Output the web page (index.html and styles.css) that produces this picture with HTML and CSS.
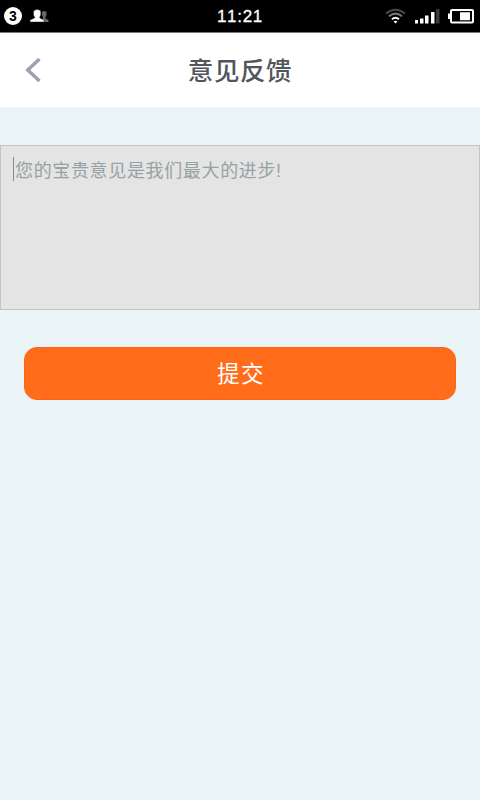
FILE: index.html
```html
<!DOCTYPE html>
<html lang="zh-CN">
<head>
<meta charset="utf-8">
<title>意见反馈</title>
<link rel="stylesheet" href="styles.css">
</head>
<body>
<div class="status">
  <div class="status-left">
    <span class="count">3</span>
    <svg class="people" width="20" height="14" viewBox="0 0 20 14"><path fill="#686868" d="M10.500 13v-2l2.500-1.500V8l-1-2V3.500Q12 2 14.200 2T16.500 3.500V6l-1 2v1.500l3 1.500v2z"/><path fill="#fff" stroke="#000" stroke-width=".4" d="M0 13v-2l4.500-2V8L3.500 6V3Q3.500 .5 7.200 .5T10.800 3V6L9.800 8v1l4.200 2v2z"/></svg>
  </div>
  <time class="clock">11:21</time>
  <div class="status-right">
    <svg width="94" height="20" viewBox="0 0 94 20">
      <g fill="none" stroke-width="2"><path stroke="#484848" d="M1 7.500Q10.500 0 20 7.500"/><path stroke="#777" d="M4 10.300Q10.500 5 17 10.300"/><path stroke="#fff" d="M7 13.300Q10.500 10.300 14 13.300"/></g>
      <path fill="#fff" d="M8.500 15.500Q10.500 14 12.500 15.500L10.500 17.500z"/>
      <path fill="#fff" d="M30 14h3v3.500h-3zM35 12.500h3.500v5H35zM40 9.500h3.500v8H40zM46 6h3.500v11.500H46z"/><path fill="#3b3b3b" d="M51 3h3.500v14.500H51z"/>
      <rect x="66" y="4" width="22" height="12.500" rx="1" fill="none" stroke="#fff" stroke-width="2"/><path fill="#fff" d="M63 7.500h3v5.500h-3zM75 6.300h10v8H75z"/>
    </svg>
  </div>
</div>
<header class="header">
  <a class="back" aria-label="返回"><svg width="20" height="28" viewBox="0 0 20 28"><path d="M15.500 3L3.800 14L15.500 25" fill="none" stroke="#9aa1b3" stroke-width="3.500"/></svg></a>
  <h1 class="title">意见反馈</h1>
</header>
<main>
  <div class="field"><span class="caret"></span><span class="hint">您的宝贵意见是我们最大的进步!</span></div>
  <button class="submit">提交</button>
</main>
</body>
</html>
```
FILE: styles.css
```css
* { box-sizing: border-box; }
body {
  margin: 0;
  min-height: 800px;
  background: #eaf3f6;
  font-family: "Liberation Sans", "Noto Sans CJK SC", sans-serif;
}
.status {
  display: grid;
  grid-template-columns: 1fr auto 1fr;
  align-items: center;
  height: 33px;
  padding: 0 1px 0 4px;
  background: #000;
  border-bottom: 1px solid #777;
  color: #fff;
}
.status-left { display: flex; align-items: center; gap: 8px; }
.count {
  width: 18px;
  height: 18px;
  border-radius: 50%;
  background: #fff;
  color: #000;
  font: bold 14px/18px "Liberation Sans", sans-serif;
  text-align: center;
}
.clock {
  margin-right: 3px;
  padding-top: 1px;
  font: 17px/31px "Liberation Sans", sans-serif;
  font-kerning: none;
  letter-spacing: .7px;
  -webkit-text-stroke: .3px #fff;
}
.status-right { display: flex; justify-content: flex-end; }
.header {
  display: grid;
  grid-template-columns: 60px 1fr 60px;
  align-items: center;
  height: 75px;
  background: #fff;
  border-bottom: 1px solid #f1f6f8;
}
.back { display: flex; padding-left: 24px; }
.title {
  margin: 0;
  padding-top: 2px;
  font-size: 25.5px;
  font-weight: 500;
  line-height: 36px;
  letter-spacing: .6px;
  text-align: center;
  color: #50565b;
}
.field {
  display: flex;
  align-items: flex-start;
  height: 165px;
  margin-top: 37px;
  padding: 11px 12px;
  background: #e4e4e4;
  border: 1px solid #c0c5c7;
}
.caret { width: 1px; height: 24px; background: #858c8e; }
.hint {
  margin-left: 1px;
  padding-top: 1px;
  font-size: 18px;
  line-height: 26px;
  letter-spacing: .65px;
  color: #98a1a3;
}
.submit {
  display: block;
  width: 432px;
  height: 53px;
  margin: 37px auto 0;
  padding: 3px 0 0 2px;
  border: 1px solid #ff6210;
  border-radius: 13px;
  background: #ff6d1a;
  color: #fff;
  font: 22.5px/48px "Liberation Sans", "Noto Sans CJK SC", sans-serif;
  letter-spacing: 1.5px;
}
```
